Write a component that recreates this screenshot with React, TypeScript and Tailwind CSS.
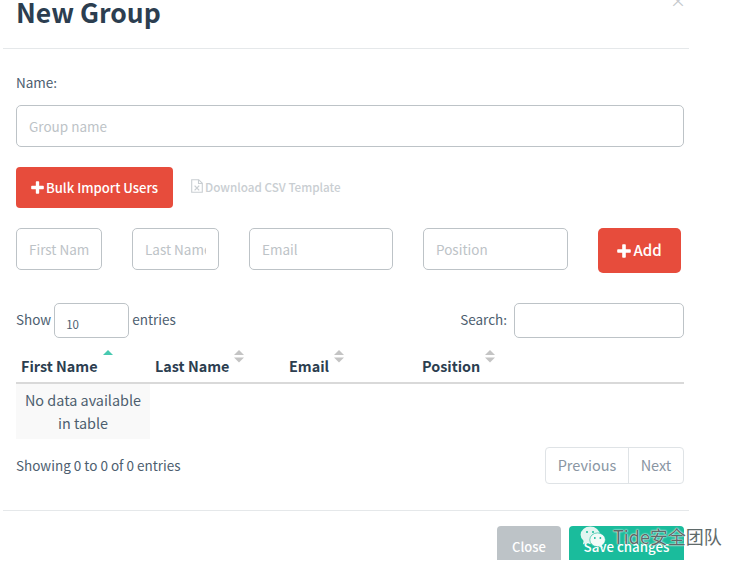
const fieldClass =
  'h-[42px] rounded-[5px] border border-[#bdc3c7] bg-white px-3 text-[13.5px] text-[#2c3e50] placeholder:text-[#bdc3c7] outline-none';

function PlusIcon({ className }: { className?: string }) {
  return (
    <svg viewBox="0 0 14 14" className={className} fill="currentColor">
      <path d="M5.2 1a.8.8 0 0 1 .8-.8h2a.8.8 0 0 1 .8.8v4.2H13a.8.8 0 0 1 .8.8v2a.8.8 0 0 1-.8.8H8.8V13a.8.8 0 0 1-.8.8H6a.8.8 0 0 1-.8-.8V8.8H1A.8.8 0 0 1 .2 8V6A.8.8 0 0 1 1 5.2h4.2z" />
    </svg>
  );
}

function FileExcelIcon({ className }: { className?: string }) {
  return (
    <svg viewBox="0 0 12 14" className={className} fill="none" stroke="currentColor" strokeWidth="1.1">
      <path d="M.7.7h7l3.6 3.6v9H.7z" />
      <path d="M7.5.7v3.8h3.8" />
      <path d="M3.6 6.6l4.6 4.8M8.2 6.6l-4.6 4.8" strokeWidth="1.3" />
    </svg>
  );
}

function SortIcon({ active }: { active?: boolean }) {
  return (
    <svg viewBox="0 0 10 13" className="ml-[5px] mt-[-18px] h-[13px] w-[10px]">
      <path d="M5 0l5 5H0z" fill={active ? '#48c9b0' : '#c4c4c4'} />
      {!active && <path d="M0 7.5h10l-5 5z" fill="#c4c4c4" />}
    </svg>
  );
}

function WeChatIcon({ className }: { className?: string }) {
  return (
    <svg viewBox="0 0 28 25" className={className}>
      <ellipse cx="11" cy="9.5" rx="10.5" ry="9" fill="#e3f5f0" />
      <path d="M4 15l-1 5 6-3z" fill="#e3f5f0" />
      <ellipse cx="19" cy="15" rx="8.5" ry="7.5" fill="#f2fbf8" stroke="#1abc9c" strokeWidth="0.7" />
      <path d="M23 20l2 4-5-2z" fill="#f2fbf8" />
      <circle cx="7.5" cy="6.5" r="1.1" fill="#1abc9c" />
      <circle cx="14" cy="6.5" r="1.1" fill="#1abc9c" />
      <circle cx="16" cy="13" r="1" fill="#1abc9c" />
      <circle cx="22" cy="13" r="1" fill="#1abc9c" />
    </svg>
  );
}

function HeaderCell({ label, active }: { label: string; active?: boolean }) {
  return (
    <th className="h-[38px] p-0 pl-[5px] text-left align-bottom">
      <span className="flex h-[38px] items-center pt-[5px] text-[14.4px] font-bold text-[#2c3e50]">
        {label}
        <SortIcon active={active} />
      </span>
    </th>
  );
}

export default function App() {
  return (
    <div className="relative h-[569px] w-[745px] overflow-hidden bg-white font-['Noto_Sans_CJK_SC','Source_Sans_Pro',sans-serif] text-[13.5px] text-[#4d5e6f]">
      <div className="ml-[3px] w-[686px]">
        {/* Header */}
        <div className="relative flex h-[49px] items-start overflow-hidden border-b border-[#e5e8ea] pl-[13px]">
          <h1 className="mt-[-10px] text-[26.5px] leading-[44px] font-bold text-[#2c3e50]">New Group</h1>
          <span className="absolute top-[-9px] right-[3px] text-[16px] leading-[18px] text-[#c4c8cc]">×</span>
        </div>

        {/* Body */}
        <div className="pr-[5px] pl-[13px]">
          <div className="mt-[23px] h-[20px] leading-[20px]">Name:</div>
          <input className={`mt-[13px] block w-full ${fieldClass}`} placeholder="Group name" />

          <div className="mt-[20px] flex items-center">
            <button className="flex h-[41px] w-[157px] items-center justify-center gap-[2px] rounded-[4px] bg-[#e74c3c] text-[13.1px] font-medium text-white">
              <PlusIcon className="h-[13px] w-[13px]" />
              Bulk Import Users
            </button>
            <a className="ml-[18px] flex items-center gap-[2px] text-[11.7px] font-medium text-[#c9ced2]">
              <FileExcelIcon className="mt-[-2px] h-[14px] w-[12px]" />
              <span className="mt-[-1px]">Download CSV Template</span>
            </a>
          </div>

          <div className="mt-[20px] flex items-start">
            <input className={`w-[86px] ${fieldClass}`} placeholder="First Name" />
            <input className={`ml-[30px] w-[87px] ${fieldClass}`} placeholder="Last Name" />
            <input className={`ml-[30px] w-[144px] ${fieldClass}`} placeholder="Email" />
            <input className={`ml-[30px] w-[145px] ${fieldClass}`} placeholder="Position" />
            <button className="ml-[30px] flex h-[45px] w-[83px] items-center justify-center gap-[2px] rounded-[5px] bg-[#e74c3c] text-[15px] font-medium text-white">
              <PlusIcon className="h-[14px] w-[14px]" />
              Add
            </button>
          </div>

          {/* Table controls */}
          <div className="mt-[30px] flex h-[35px] items-center justify-between">
            <div className="flex items-center">
              <span className="mt-[-2px]">Show</span>
              <div className="mx-[3px] flex h-[35px] w-[75px] items-end rounded-[5px] border border-[#bdc3c7] pb-[3px] pl-[11px] text-[11.5px] leading-[20px]">
                10
              </div>
              <span className="mt-[-2px]">entries</span>
            </div>
            <div className="flex items-center">
              <span className="mt-[-2px]">Search:</span>
              <input className="ml-[7px] h-[35px] w-[170px] rounded-[5px] border border-[#bdc3c7] outline-none" />
            </div>
          </div>

          {/* Table */}
          <table className="mt-[6px] w-full table-fixed border-collapse">
            <colgroup>
              <col className="w-[134px]" />
              <col className="w-[134px]" />
              <col className="w-[133px]" />
              <col />
            </colgroup>
            <thead>
              <tr className="border-b-2 border-[#d9d9d9]">
                <HeaderCell label="First Name" active />
                <HeaderCell label="Last Name" />
                <HeaderCell label="Email" />
                <HeaderCell label="Position" />
              </tr>
            </thead>
            <tbody>
              <tr>
                <td className="h-[56px] bg-[#f9f9f9] p-0 px-[5px] pb-[2px] text-center text-[14.4px] leading-[23px]">
                  No data available in table
                </td>
                <td colSpan={3} />
              </tr>
            </tbody>
          </table>

          <div className="mt-[8px] flex h-[37px] items-center justify-between">
            <div>Showing 0 to 0 of 0 entries</div>
            <div className="flex h-[37px] rounded-[4px] border border-[#dfe3e6] text-[14.5px] text-[#8a96a3]">
              <span className="flex w-[83px] items-center justify-center border-r border-[#dfe3e6] pb-[2px]">Previous</span>
              <span className="flex w-[54px] items-center justify-center pb-[2px]">Next</span>
            </div>
          </div>
        </div>

        {/* Footer */}
        <div className="mt-[26px] flex justify-end gap-[8px] border-t border-[#e5e8ea] pt-[15px] pr-[5px]">
          <button className="h-[34px] w-[64px] overflow-hidden rounded-t-[4px] bg-[#bdc3c7] pt-[8px] text-[13px] font-medium text-white">
            Close
          </button>
          <button className="h-[34px] w-[115px] overflow-hidden rounded-t-[4px] bg-[#1abc9c] pt-[8px] text-[13.3px] font-medium text-white">
            Save changes
          </button>
        </div>
      </div>

      {/* Watermark */}
      <div className="absolute top-[523px] left-[579px] flex items-center gap-[6px]">
        <WeChatIcon className="mt-[3px] h-[23px] w-[28px]" />
        <span className="text-[18px] leading-[24px] text-[#5f6a6a] [text-shadow:0_0_1px_#fff,0_0_2px_#fff]">
          Tide安全团队
        </span>
      </div>
    </div>
  );
}
